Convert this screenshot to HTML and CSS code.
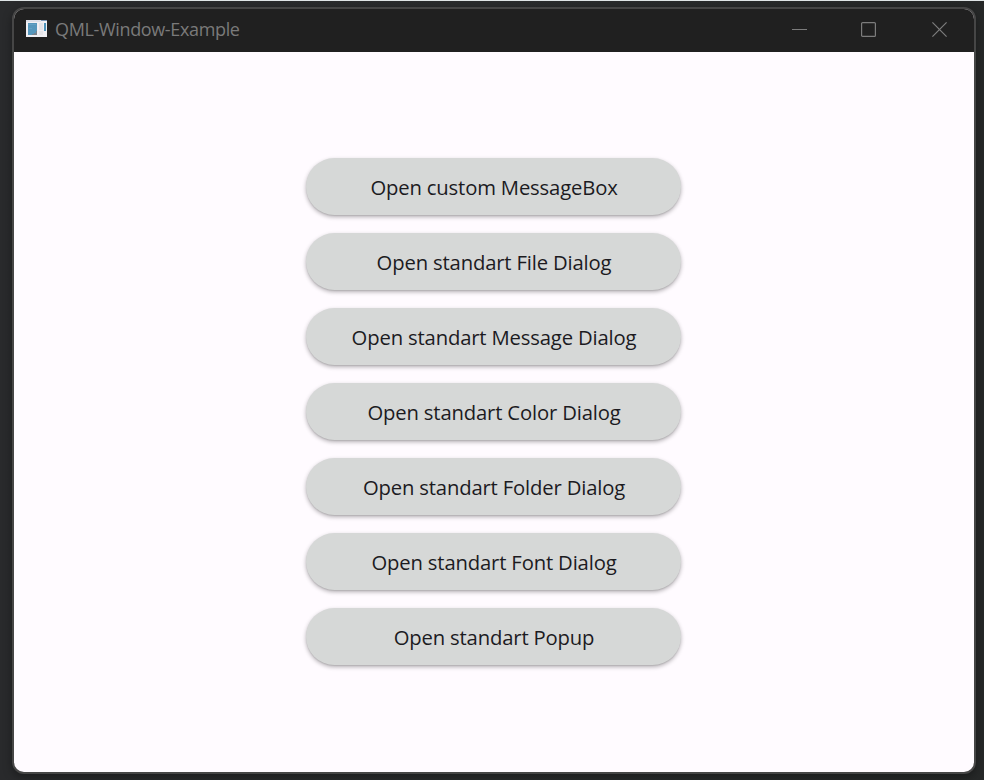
FILE: index.html
```html
<!DOCTYPE html>
<html lang="en">
<head>
<meta charset="utf-8">
<title>QML-Window-Example</title>
<link rel="stylesheet" href="styles.css">
</head>
<body>
<div class="window">
  <header class="titlebar">
    <svg class="app-icon" width="21" height="17" viewBox="0 0 21 17" shape-rendering="crispEdges">
      <rect width="21" height="17" fill="#f0eff3"/>
      <rect width="15" height="2" fill="#dcdfe8"/>
      <rect x="15" width="6" height="1" fill="#7894b4"/>
      <rect x="2" y="3" width="9" height="12" fill="#5596bb"/>
      <path d="M2 4h8v1H2zM3 8h3v1H3z" fill="#62a0c4"/>
      <path d="M11 11v4H6v-1h2v-1h2v-2z" fill="#77818b"/>
      <rect x="13" y="3" width="4" height="7" fill="#e3e3e8"/>
      <rect x="13" y="11" width="4" height="4" fill="#e6e5e9"/>
      <rect x="18" y="3" width="2" height="8" fill="#4c91b8"/>
    </svg>
    <span class="title">QML-Window-Example</span>
    <div class="controls">
      <svg width="15" height="15" viewBox="0 0 15 15"><path d="M0 7.5h15"/></svg>
      <svg class="maximize" width="15" height="15" viewBox="0 0 15 15"><rect x=".6" y=".6" width="13.8" height="13.8" rx="1"/></svg>
      <svg width="15" height="15" viewBox="0 0 15 15"><path d="M.4.4l14.2 14.2M14.6.4L.4 14.6"/></svg>
    </div>
  </header>
  <main class="content">
    <button class="btn">Open custom MessageBox</button>
    <button class="btn">Open standart File Dialog</button>
    <button class="btn">Open standart Message Dialog</button>
    <button class="btn">Open standart Color Dialog</button>
    <button class="btn">Open standart Folder Dialog</button>
    <button class="btn">Open standart Font Dialog</button>
    <button class="btn">Open standart Popup</button>
  </main>
</div>
</body>
</html>
```
FILE: styles.css
```css
* { box-sizing: border-box; }
body {
  margin: 0;
  height: 780px;
  padding: 6px 8px 6px 12px;
  border-top: 1px solid #dfe5e6;
  background: linear-gradient(90deg, #292a2c, #2a2c2d 50%, #262828);
  font-family: "Open Sans", "Noto Sans", sans-serif;
  overflow: hidden;
}
.window {
  width: 964px;
  height: 767px;
  border: 2px solid #464646;
  border-radius: 12px;
  background: #fffbff;
  overflow: hidden;
  box-shadow: 0 3px 10px rgba(0, 0, 0, .35);
}
.titlebar {
  height: 43px;
  display: flex;
  align-items: center;
  padding: 0 27px 0 12px;
  background: #202020;
}
.app-icon { flex: none; margin-bottom: 4px; }
.title {
  margin-left: 8px;
  padding-bottom: 4px;
  font-size: 18px;
  letter-spacing: -.35px;
  line-height: 24px;
  color: #7a7a7a;
  white-space: nowrap;
}
.controls {
  display: flex;
  gap: 55px;
  margin-left: auto;
  padding-bottom: 3px;
}
.controls svg {
  display: block;
  fill: none;
  stroke: #7c7c7c;
  stroke-width: 1.2;
}
.controls .maximize { margin: 0 1px 0 -1px; }
.content {
  height: 720px;
  padding: 106px 0 0 292px;
  display: flex;
  flex-direction: column;
  gap: 18px;
}
.btn {
  width: 375px;
  height: 57px;
  flex: none;
  border: 0;
  border-radius: 29px;
  padding: 1px 0 0 1px;
  background: #d6d8d7;
  color: #1c1b1f;
  font: 20.25px/28px "Open Sans", "Noto Sans", sans-serif;
  letter-spacing: -.16px;
  box-shadow: 0 1px 1px rgba(0, 0, 0, .08), 0 2px 4px rgba(0, 0, 0, .3);
}
```
